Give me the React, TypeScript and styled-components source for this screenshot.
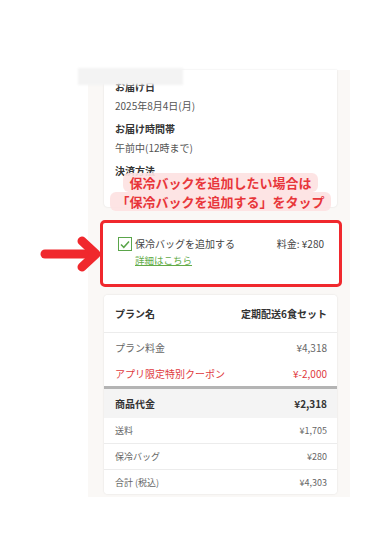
import styled, { createGlobalStyle } from "styled-components";

const GlobalStyle = createGlobalStyle`
    body {
        margin: 0;
        background: #fff;
        font-family: "Noto Sans CJK JP", "Noto Sans", sans-serif;
    }
`

const Screen = styled.div`
    position: relative;
    margin: 70px 0 0 88px;
    width: 262px;
    height: 427px;
    box-sizing: border-box;
    padding: 0 13px 0 16px;
    background: #faf8f6;
    display: flex;
    flex-direction: column;
`

const Card = styled.div<{ $height?: number }>`
    background: #fff;
    border-radius: 4px;
    box-shadow: 0 0 2px rgba(0, 0, 0, 0.12);
    overflow: hidden;
    height: ${p => (p.$height ? p.$height + "px" : "auto")};
    box-sizing: border-box;
`

const InfoCard = styled(Card)`
    padding: 8px 11px 0;
    border-radius: 0 0 4px 4px;
`

const Field = styled.div`
    margin-bottom: 5px;
`

const Label = styled.div`
    font-size: 10px;
    font-weight: 700;
    line-height: 18px;
    color: #333;
`

const Value = styled.div`
    font-size: 10px;
    line-height: 18px;
    margin-top: 1px;
    color: #555;
`

const Blur = styled.div`
    position: absolute;
    left: -10px;
    top: -2px;
    width: 105px;
    height: 17px;
    background: #f3f3f3;
    filter: blur(1px);
`

const Callout = styled.div`
    position: absolute;
    left: 0;
    right: 0;
    top: 103px;
    display: flex;
    flex-direction: column;
    align-items: center;
    padding-left: 3px;
`

const CalloutLine = styled.span`
    font-size: 13px;
    font-weight: 700;
    line-height: 19px;
    color: #e8363a;
    background: rgba(253, 226, 226, 0.92);
    border-radius: 6px;
    padding: 0 6px;
`

const Highlight = styled.div`
    margin: 13px -5px 0 -4px;
    border: 3px solid #f0282d;
    border-radius: 5px;
    background: #fff;
    padding: 14px 15px 17px;
`

const OptionRow = styled.div`
    display: flex;
    align-items: center;
    font-size: 10px;
    line-height: 14px;
    color: #444;
`

const Check = styled.span`
    width: 14px;
    height: 14px;
    box-sizing: border-box;
    border: 1.5px solid #5aa54a;
    display: flex;
    align-items: center;
    justify-content: center;
    margin-right: 3px;
`

const Price = styled.span`
    margin-left: auto;
`

const DetailLink = styled.a`
    display: block;
    margin: 2px 0 0 17px;
    font-size: 9.5px;
    line-height: 14px;
    color: #62ab48;
    text-decoration: underline;
`

const Row = styled.div<{ $bold?: boolean; $red?: boolean; $h: number; $line?: boolean; $shade?: boolean; $small?: boolean }>`
    display: flex;
    justify-content: space-between;
    align-items: center;
    height: ${p => p.$h}px;
    padding: 0 10px 0 11px;
    font-size: ${p => (p.$small ? "9px" : "10px")};
    font-weight: ${p => (p.$bold ? 700 : 400)};
    color: ${p => (p.$red ? "#e03a3e" : p.$bold ? "#333" : "#666")};
    background: ${p => (p.$shade ? "#f4f4f4" : "#fff")};
    border-bottom: ${p => (p.$line ? "1px solid #ececec" : "none")};
`

const Divider = styled.div`
    height: 3px;
    background: #b4b4b4;
`

const Arrow = styled.svg`
    position: absolute;
    left: -48px;
    top: 166px;
`

export default function App() {
    return (
        <>
            <GlobalStyle />
            <Screen>
                <InfoCard $height={137}>
                    <Field>
                        <Label>お届け日</Label>
                        <Value>2025年8月4日(月)</Value>
                    </Field>
                    <Field>
                        <Label>お届け時間帯</Label>
                        <Value>午前中(12時まで)</Value>
                    </Field>
                    <Field>
                        <Label>決済方法</Label>
                    </Field>
                </InfoCard>
                <Blur />
                <Callout>
                    <CalloutLine>保冷バックを追加したい場合は</CalloutLine>
                    <CalloutLine>「保冷バックを追加する」をタップ</CalloutLine>
                </Callout>

                <Highlight>
                    <OptionRow>
                        <Check>
                            <svg width="10" height="9" viewBox="0 0 10 9">
                                <path d="M1 4.5 L3.8 7.3 L9 1.5" fill="none" stroke="#5aa54a" strokeWidth="1.5" />
                            </svg>
                        </Check>
                        保冷バッグを追加する
                        <Price>料金: ¥280</Price>
                    </OptionRow>
                    <DetailLink>詳細はこちら</DetailLink>
                </Highlight>
                <Arrow width="62" height="36" viewBox="0 0 62 36">
                    <path d="M5 18 H52" stroke="#f0282d" strokeWidth="9" strokeLinecap="round" />
                    <path d="M42 5 L56 18 L42 31" fill="none" stroke="#f0282d" strokeWidth="9" strokeLinecap="round" strokeLinejoin="round" />
                </Arrow>

                <Card style={{ marginTop: 8 }}>
                    <Row $h={37} $bold $line>
                        <span>プラン名</span>
                        <span>定期配送6食セット</span>
                    </Row>
                    <div style={{ paddingTop: 1 }}>
                        <Row $h={26}>
                            <span>プラン料金</span>
                            <span>¥4,318</span>
                        </Row>
                        <Row $h={26} $red>
                            <span>アプリ限定特別クーポン</span>
                            <span>¥-2,000</span>
                        </Row>
                    </div>
                    <Divider />
                    <Row $h={29} $bold $shade>
                        <span>商品代金</span>
                        <span>¥2,318</span>
                    </Row>
                    <Row $h={25} $small $line>
                        <span>送料</span>
                        <span>¥1,705</span>
                    </Row>
                    <Row $h={25} $small $line>
                        <span>保冷バッグ</span>
                        <span>¥280</span>
                    </Row>
                    <Row $h={24} $small>
                        <span>合計 (税込)</span>
                        <span>¥4,303</span>
                    </Row>
                </Card>
            </Screen>
        </>
    );
}
